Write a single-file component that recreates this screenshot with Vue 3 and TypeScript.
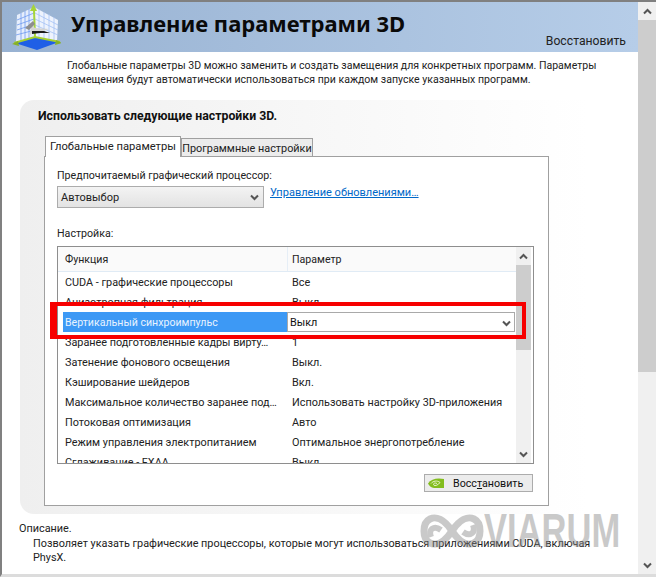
<script setup lang="ts">
interface Row { name: string; value: string }
const rowsTop: Row[] = [
  { name: 'CUDA - графические процессоры', value: 'Все' },
  { name: 'Анизотропная фильтрация', value: 'Выкл.' },
]
const rowsBottom: Row[] = [
  { name: 'Заранее подготовленные кадры вирту…', value: '1' },
  { name: 'Затенение фонового освещения', value: 'Выкл.' },
  { name: 'Кэширование шейдеров', value: 'Вкл.' },
  { name: 'Максимальное количество заранее под…', value: 'Использовать настройку 3D-приложения' },
  { name: 'Потоковая оптимизация', value: 'Авто' },
  { name: 'Режим управления электропитанием', value: 'Оптимальное энергопотребление' },
  { name: 'Сглаживание - FXAA', value: 'Выкл.' },
]
</script>

<template>
  <div class="window">
    <main class="content">
      <header class="head">
        <svg class="cube" width="50" height="48" viewBox="0 0 50 48">
          <path d="M6 11L23 3 24 33 5 38Z" fill="#e6eefc"/>
          <path d="M23 3L47 16 46 38 24 33Z" fill="#eef3fd"/>
          <path d="M6 16l17-7M6 21l17-6M6 26l18-6M5 31l19-5M10 9v28M14 7v29M18 5v30" stroke="#6f9bf0" stroke-width=".8" fill="none"/>
          <path d="M24 9l23 12M24 15l23 11M24 21l23 10M28 5v29M33 8v27M38 10v26M43 13v24" stroke="#a4c1f5" stroke-width=".8" fill="none"/>
          <path d="M4 39L24 33 48 38 26 46Z" fill="#1f5fe6"/>
          <path d="M3 39L24 33 49 38" fill="none" stroke="#a5cf30" stroke-width="2"/>
          <path d="M23 6L24 33" stroke="#a6d43a" stroke-width="2"/>
          <path d="M22.500 0l-3.500 7h7z" fill="#a6d43a"/>
          <path d="M1 40l6-3 1 5zM51 39l-6-3-1 5z" fill="#87b128"/>
          <path d="M17 18l7 6 14 1-6 2-9 0-5 5 2-8z" fill="#d4d4d4"/>
          <path d="M21 27l12 0 6 2-10 0-8 1z" fill="#1c1c1c"/>
          <path d="M14 24l8-7 2 3-6 6z" fill="#8e8e8e"/>
        </svg>
        <h1 class="title">Управление параметрами 3D</h1>
        <span class="restore-top">Восстановить</span>
      </header>

      <p class="intro">Глобальные параметры 3D можно заменить и создать замещения для конкретных программ. Параметры замещения будут автоматически использоваться при каждом запуске указанных программ.</p>

      <section class="panel">
        <h2 class="panel-title">Использовать следующие настройки 3D.</h2>
        <div class="tabs">
          <div class="tab active">Глобальные параметры</div>
          <div class="tab">Программные настройки</div>
        </div>
        <div class="tab-body">
          <div class="label">Предпочитаемый графический процессор:</div>
          <div class="gpu-row">
            <div class="gpu-select">
              <span>Автовыбор</span>
              <svg width="9" height="7" viewBox="0 0 9 7"><path d="M1 1.5l3.5 3.5L8 1.5" fill="none" stroke="#555" stroke-width="2"/></svg>
            </div>
            <a class="link">Управление обновлениями…</a>
          </div>
          <div class="label settings-label">Настройка:</div>

          <div class="table">
            <div class="table-main">
              <div class="thead">
                <div class="c1 th">Функция</div>
                <div class="c2 th">Параметр</div>
              </div>
              <div class="row" v-for="r in rowsTop" :key="r.name">
                <div class="c1">{{ r.name }}</div><div class="c2">{{ r.value }}</div>
              </div>
              <div class="row sel-row">
                <div class="sel-name">Вертикальный синхроимпульс</div>
                <div class="sel-value">
                  <span>Выкл</span>
                  <svg width="9" height="7" viewBox="0 0 9 7"><path d="M1 1.5l3.5 3.5L8 1.5" fill="none" stroke="#555" stroke-width="2"/></svg>
                </div>
              </div>
              <div class="row" v-for="r in rowsBottom" :key="r.name">
                <div class="c1">{{ r.name }}</div><div class="c2">{{ r.value }}</div>
              </div>
            </div>
            <div class="vbar small">
              <div class="arrow"><svg width="9" height="7" viewBox="0 0 9 7"><path d="M1 5.5L4.5 2 8 5.5" fill="none" stroke="#555" stroke-width="2"/></svg></div>
              <div class="thumb small-thumb"></div>
              <div class="track"></div>
              <div class="arrow"><svg width="9" height="7" viewBox="0 0 9 7"><path d="M1 1.5l3.5 3.5L8 1.5" fill="none" stroke="#555" stroke-width="2"/></svg></div>
            </div>
            <div class="red-box"></div>
          </div>

          <div class="btn-row">
            <button class="btn">
              <svg width="16" height="10" viewBox="0 0 16 10">
                <path d="M0 5.500C3 1 9-.5 16 1v9H6C3 10 1 7.500 0 5.500Z" fill="#83bd1e"/>
                <path d="M3 5.500C5 3 9 2 12 4.500 10 7.500 6 8.500 5.500 6.500 5.500 5 7.500 4.500 9 5.500" fill="none" stroke="#e8f4cc" stroke-width="1"/>
              </svg>
              <span>Восс<u>т</u>ановить</span>
            </button>
          </div>
        </div>
      </section>

      <div class="desc">
        <div>Описание.</div>
        <p>Позволяет указать графические процессоры, которые могут использоваться приложениями CUDA, включая PhysX.</p>
      </div>

      <div class="mark">
        <svg width="64" height="36" viewBox="0 0 64 36">
          <path d="M32 18C24 6 16 3 10 6 2 10 2 26 10 30 16 33 24 30 32 18 40 6 48 3 54 6 62 10 62 26 54 30 48 33 40 30 32 18Z" fill="none" stroke="#8a8a8a" stroke-width="7"/>
          <path d="M11 24C8 16 14 12 21 17M53 12C56 20 50 24 43 19" fill="none" stroke="#8a8a8a" stroke-width="6"/>
        </svg>
        <span class="mark-text">VIARUM</span>
      </div>
    </main>

    <aside class="vbar big">
      <div class="arrow"><svg width="9" height="7" viewBox="0 0 9 7"><path d="M1 5.5L4.5 2 8 5.5" fill="none" stroke="#555" stroke-width="2"/></svg></div>
      <div class="thumb big-thumb"></div>
      <div class="track"></div>
      <div class="arrow"><svg width="9" height="7" viewBox="0 0 9 7"><path d="M1 1.5l3.5 3.5L8 1.5" fill="none" stroke="#555" stroke-width="2"/></svg></div>
    </aside>
  </div>
</template>

<style>
html, body { margin: 0; background: #fff; }
</style>

<style scoped>
.window {
  width: 656px; height: 577px; box-sizing: border-box; overflow: hidden;
  border-top: 2px solid #808080; border-left: 2px solid #808080; border-bottom: 3px solid #dcdcdc;
  display: flex; background: #fff; color: #111;
  font-family: Roboto, "Noto Sans", sans-serif; font-size: 10.85px;
}
.content { width: 636px; flex: none; position: relative; }
.head {
  height: 50px; position: relative; display: flex; align-items: flex-start;
  background: linear-gradient(90deg, #98b2d2, #b6cde8);
}
.cube { margin: 2px 0 0 9px; flex: none; }
.title {
  margin: 6px 0 0 10px; font: 700 22px/30px "Noto Sans", sans-serif; color: #0a0a0a;
  white-space: nowrap;
}
.restore-top { position: absolute; right: 12px; bottom: 4px; color: #222; font-size: 12.2px; }
.intro { margin: 7px 15px 0 65px; line-height: 14px; color: #222; height: 28px; font-size: 10.55px; }
.panel {
  margin: 13px 0 0 18px; height: 414px; box-sizing: border-box; padding: 0 89px 0 24px;
  border-radius: 14px 0 0 14px; background: linear-gradient(90deg, #efefef, #ffffff 92%);
}
.panel-title { margin: 0 0 0 -6px; padding-top: 8px; font: 700 12.3px/16px Roboto, sans-serif; color: #111; height: 36px; box-sizing: border-box; }
.tabs { display: flex; align-items: flex-end; height: 20px; position: relative; z-index: 1; padding-left: 1px; }
.tab {
  box-sizing: border-box; height: 18px; line-height: 20px; width: 132px; text-align: center; white-space: nowrap;
  border: 1px solid #a0a0a0; border-bottom: none; background: #ececec; color: #222;
}
.tab.active { height: 21px; width: 136px; background: #fff; line-height: 19px; margin-bottom: -1px; font-size: 11.2px; }
.tab-body {
  box-sizing: border-box; height: 350px; background: #fff; border: 1px solid #a0a0a0; padding: 12px 12px 0;
}
.label { line-height: 14px; color: #222; font-size: 10.65px; }
.gpu-row { display: flex; align-items: flex-start; margin-top: 3px; }
.gpu-select {
  box-sizing: border-box; width: 207px; height: 22px; display: flex; align-items: center; justify-content: space-between;
  padding: 1px 4px 0 3px; border: 1px solid #acacac; background: linear-gradient(#f3f3f3, #e3e3e3); color: #222;
  font-size: 11px;
}
.link { margin: 0 0 0 6px; color: #0068c8; text-decoration: underline; line-height: 14px; font-size: 11px; }
.settings-label { margin-top: 19px; }
.table {
  position: relative; margin-top: 5px; width: 477px; height: 218px; box-sizing: border-box;
  border: 1px solid #8e8e8e; display: flex; overflow: visible;
}
.table-main { width: 458px; flex: none; overflow: hidden; }
.thead { display: flex; height: 24px; background: #fafafa; border-bottom: 1px solid #e0ebf5; align-items: center; margin-right: -1px; }
.th { color: #222; border-right: 1px solid #e6eef6; height: 24px; line-height: 26px; font-size: 10.6px; }
.th.c2 { padding-left: 4px; }
.row { display: flex; height: 20px; line-height: 22px; color: #222; white-space: nowrap; }
.c1 { width: 222px; padding-left: 7px; overflow: hidden; flex: none; }
.c2 { padding-left: 5px; flex: 1; }
.sel-row { padding-left: 5px; }
.sel-name { width: 224px; flex: none; background: #3d99f5; color: #e8f3ff; padding-left: 2px; box-sizing: border-box; height: 20px; line-height: 21px; font-size: 10.6px; }
.sel-value {
  width: 228px; flex: none; box-sizing: border-box; height: 20px; border: 1px solid #a9a9a9; background: #fff;
  display: flex; justify-content: space-between; align-items: center; padding: 2px 3px 0 2px; color: #111; line-height: 16px;
}
.red-box {
  position: absolute; left: -8px; top: 55px; width: 476px; height: 37px; box-sizing: border-box;
  border: 4px solid #f70000; border-left-width: 7px; pointer-events: none;
}
.vbar { display: flex; flex-direction: column; background: #f0f0f0; flex: none; }
.vbar.small { width: 15px; }
.vbar.big { width: 18px; }
.arrow { height: 18px; display: flex; align-items: center; justify-content: center; flex: none; }
.thumb { background: #cdcdcd; flex: none; }
.small-thumb { height: 85px; }
.big-thumb { height: 352px; }
.track { flex: 1; }
.btn-row { display: flex; justify-content: flex-end; margin-top: 10px; padding-right: 3px; }
.btn {
  box-sizing: border-box; width: 109px; height: 18px; padding: 0 0 0 3px; display: flex; align-items: center; gap: 9px;
  background: #ececec; border: 1px solid #acacac; font: inherit; color: #111; font-size: 10.7px;
}
.desc { margin: 8px 0 0 17px; line-height: 14px; color: #222; }
.desc p { margin: 1px 30px 0 14px; }
.mark {
  position: absolute; left: 418px; top: 511px; display: flex; align-items: center; gap: 0; opacity: .45;
  color: #8a8a8a; pointer-events: none;
}
.mark-text { display: inline-block; font: 700 48px/36px "Liberation Sans", sans-serif; transform: scaleX(.72); transform-origin: left; }
</style>
